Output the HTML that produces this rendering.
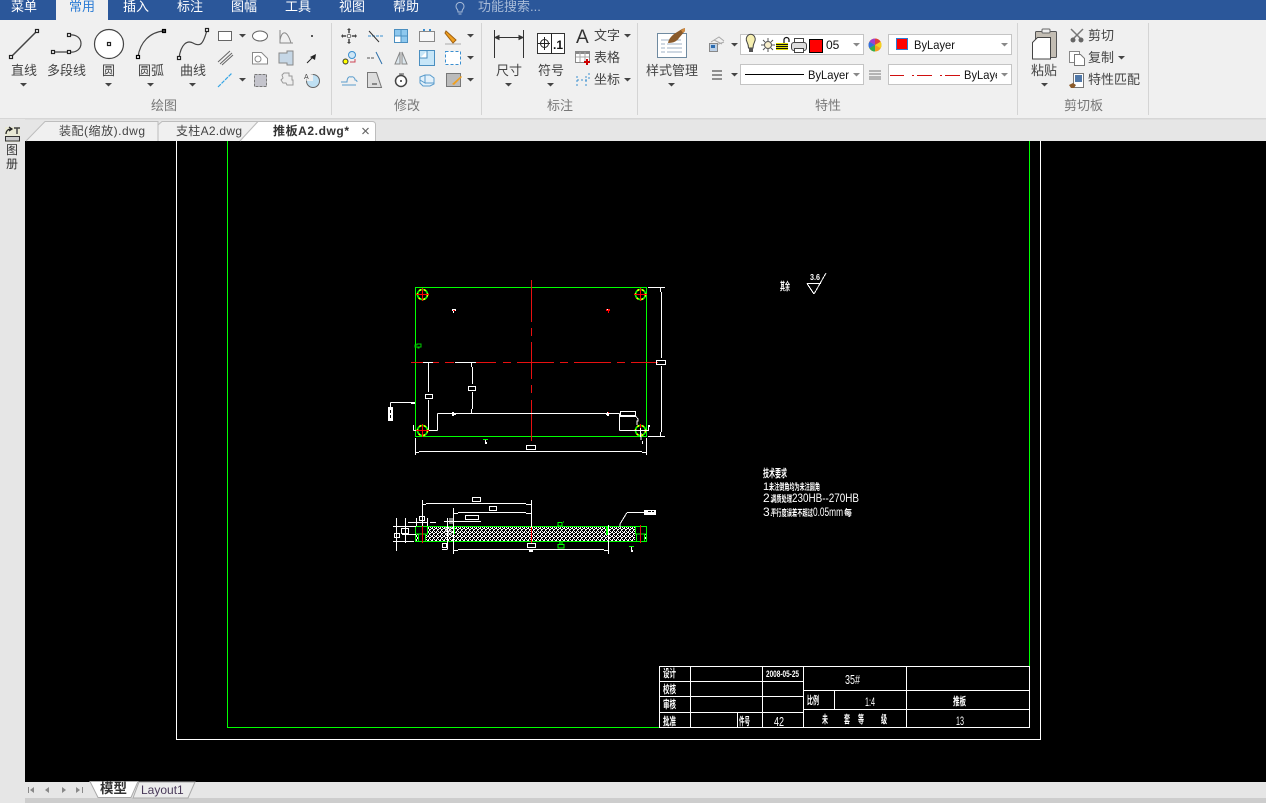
<!DOCTYPE html>
<html lang="zh">
<head>
<meta charset="utf-8">
<title>CAD</title>
<style>
html,body{margin:0;padding:0;width:1266px;height:803px;overflow:hidden;background:#000}
svg{display:block}
text{font-family:"Liberation Sans","Noto Sans CJK SC",sans-serif;white-space:pre}
.m{font-size:13px;fill:#fff}
.r{font-size:13px;fill:#444}
.g{font-size:13px;fill:#777}
.s{font-size:12px;fill:#111}
.t{font-size:12px;fill:#444}
.d{font-size:9px;fill:#fff}
.b{font-weight:bold}
.n{font-weight:normal}
.dl{stroke:#fff;fill:none;stroke-width:1}
.gr{stroke:#0f0;fill:none;stroke-width:1}
.rd{stroke:#e81010;fill:none;stroke-width:1}
.ic{fill:none;stroke:#555;stroke-width:1}
.bl{fill:none;stroke:#3a8fd0;stroke-width:1}
</style>
</head>
<body>
<svg xmlns="http://www.w3.org/2000/svg" width="1266" height="803" viewBox="0 0 1266 803">
<defs>
<path id="c" d="M-3 0h7l-3.500 3.500z" fill="#444"/>
<path id="cg" d="M-3 0h7l-3.500 3.500z" fill="#888"/>
<pattern id="h" width="4" height="4" patternUnits="userSpaceOnUse">
<rect width="4" height="4" fill="#000"/>
<path d="M0 3h1v1h-1zM1 2h1v1h-1zM2 1h1v1h-1zM3 0h1v1h-1zM0 0h1v1h-1zM2 3h1v1h-1zM1 1h1v1h-1z" fill="#fff"/>
</pattern>
</defs>

<!-- shell -->
<rect width="1266" height="803" fill="#000"/>
<rect y="0" width="1266" height="20" fill="#2b579a"/>
<rect y="20" width="1266" height="98" fill="#f0f0f0"/>
<rect y="118" width="1266" height="1.500" fill="#d6d6d6"/>
<rect y="119.500" width="1266" height="21.500" fill="#e6e6e6"/>
<rect x="0" y="119" width="25" height="684" fill="#e6e6e6"/>
<rect x="25" y="782" width="1241" height="16" fill="#e6e6e6"/>
<rect x="25" y="798" width="1241" height="5" fill="#cdcdcd"/>

<!-- menu -->
<rect x="56" y="0" width="52" height="21" fill="#f0f0f0"/>
<text class="m" x="11" y="11">菜单</text>
<text class="m" x="69" y="11" style="fill:#2a7bd4">常用</text>
<text class="m" x="123" y="11">插入</text>
<text class="m" x="177" y="11">标注</text>
<text class="m" x="231" y="11">图幅</text>
<text class="m" x="285" y="11">工具</text>
<text class="m" x="339" y="11">视图</text>
<text class="m" x="393" y="11">帮助</text>
<path d="M457 9a4 4 0 1 1 6 0c-1 1-1 2-1 3h-4c0-1 0-2-1-3zM458.500 14h3" fill="none" stroke="#a9bcd8"/>
<text class="m" x="478" y="11" style="fill:#a9bcd8">功能搜索...</text>

<!-- dividers -->
<g fill="#d4d4d4">
<rect x="331" y="23" width="1" height="92"/>
<rect x="481" y="23" width="1" height="92"/>
<rect x="637" y="23" width="1" height="92"/>
<rect x="1017" y="23" width="1" height="92"/>
<rect x="1148" y="23" width="1" height="92"/>
</g>

<!-- draw large icons -->
<g fill="none" stroke="#444" stroke-width="1.200">
<path d="M11 57L37 31" stroke-width="1.500"/>
<rect x="9.500" y="55.500" width="3" height="3" fill="#fff" stroke="#222"/>
<rect x="35.500" y="29.500" width="3" height="3" fill="#fff" stroke="#222"/>
<path d="M53 52H69M69 35C85 33 85 54 69 52"/>
<rect x="51.500" y="50.500" width="3" height="3" fill="#fff" stroke="#222"/>
<rect x="67.500" y="50.500" width="3" height="3" fill="#fff" stroke="#222"/>
<rect x="67.500" y="33.500" width="3" height="3" fill="#fff" stroke="#222"/>
<circle cx="109" cy="44" r="14.500" fill="#fff"/>
<rect x="107.500" y="42.500" width="3" height="3" fill="#fff" stroke="#222"/>
<path d="M138 57C140 42 150 32 164 31"/>
<rect x="136.500" y="55.500" width="3" height="3" fill="#fff" stroke="#000"/>
<rect x="162.500" y="29.500" width="3" height="3" fill="#000" stroke="#000"/>
<rect x="163.500" y="30.500" width="1" height="1" fill="#fff" stroke="none"/>
<path d="M179 58C181 44 187 40 193 43C200 47 203 45 207 30"/>
<rect x="177.500" y="56.500" width="3" height="3" fill="#fff" stroke="#222"/>
<rect x="205.500" y="28.500" width="3" height="3" fill="#fff" stroke="#222"/>
</g>
<text class="r" x="11" y="75">直线</text>
<text class="r" x="47" y="75">多段线</text>
<text class="r" x="102" y="75">圆</text>
<text class="r" x="138" y="75">圆弧</text>
<text class="r" x="180" y="75">曲线</text>
<use href="#c" x="23" y="83"/><use href="#c" x="108" y="83"/><use href="#c" x="150" y="83"/><use href="#c" x="192" y="83"/>
<text class="g" x="151" y="110">绘图</text>

<!-- draw small icons -->
<rect x="218.500" y="31.500" width="13" height="9" fill="#fff" stroke="#666"/>
<use href="#c" x="242" y="34"/>
<path d="M218 62L230 51M220 64L232 53M222 65L233 55" stroke="#666" fill="none"/>
<path d="M218 87L232 73" stroke="#35a5e5" stroke-width="1.200" stroke-dasharray="4 1"/>
<use href="#c" x="242" y="78"/>
<ellipse cx="260" cy="36" rx="7.500" ry="5" fill="#fff" stroke="#666"/>
<path d="M252.500 52.500h9l6 6v5.500h-15z" fill="#fff" stroke="#888"/>
<circle cx="258" cy="59" r="3" fill="none" stroke="#888"/>
<rect x="254.500" y="74.500" width="12" height="12" fill="#c4c4cc" stroke="#777" stroke-dasharray="3 1"/>
<path d="M280 30v13h13M280 40c2-10 7-10 11 3" fill="none" stroke="#888"/>
<path d="M279 53h8v-2h6v14h-6v-2h-8z" fill="#c6d7e6" stroke="#888"/>
<path d="M284 73h5v3h3v4h1v5h-6l-1-2h-3l-2-3 2-2-1-3z" fill="#eee" stroke="#999"/>
<rect x="311" y="35" width="2" height="2" fill="#555"/>
<path d="M307 63l6-6" stroke="#222"/><path d="M316 54l-1 6-5-3z" fill="#222"/>
<circle cx="313" cy="81" r="6.500" fill="#bfe0f3" stroke="#666"/>
<path d="M313 81v-6.500h-6.500v6.500z" fill="#f0f0f0"/>
<text x="304" y="79" style="font-size:7px;fill:#444">A</text>

<!-- modify -->
<path d="M349 29v4M349 39v4M342 36h4M352 36h4" stroke="#444" stroke-width="1.500"/>
<path d="M347 30h4l-2-2zM347 42h4l-2 2zM343 34v4l-2-2zM355 34v4l2-2z" fill="#444"/>
<circle cx="349" cy="36" r="1.800" fill="#fff" stroke="#666"/>
<path d="M368 36h16" stroke="#3a8fd0" stroke-dasharray="3 1"/>
<path d="M369 31l10 11" stroke="#333"/>
<rect x="394.500" y="29.500" width="13" height="13" fill="#8ec8ee" stroke="#4b8fc0"/>
<rect x="395" y="36" width="6" height="6" fill="#fff"/>
<path d="M401 30v12M395 36h12" stroke="#4b8fc0"/>
<rect x="419.500" y="31.500" width="15" height="10" fill="#f6f6f6" stroke="#888"/>
<path d="M423 30h2M429 30h2" stroke="#3a8fd0" stroke-width="2"/>
<path d="M446 31l10 9-3 3-8-10z" fill="#f0a020" stroke="#a06010"/>
<path d="M445 44h16" stroke="#aaa"/>
<use href="#c" x="470" y="34"/>

<circle cx="352" cy="55" r="3.500" fill="#cfe6f5" stroke="#3a8fd0"/>
<rect x="343" y="59" width="5" height="5" rx="2.500" fill="#ff0" stroke="#333"/>
<path d="M350 62h5v-3" stroke="#c45" fill="none"/>
<path d="M367 58h8" stroke="#555" stroke-dasharray="3 1"/>
<path d="M376 52l6 12" stroke="#2a6ea8"/>
<path d="M400 52v12h-5zM402 52v12h5z" fill="#dce7ee" stroke="#888"/>
<rect x="419.500" y="50.500" width="15" height="15" fill="#c7e6f8" stroke="#4b8fc0"/>
<path d="M420 58h7v-7" fill="#fff" stroke="#4b8fc0"/>
<rect x="445.500" y="51.500" width="15" height="13" fill="#fff" stroke="#3a8fd0" stroke-dasharray="3 2"/>
<use href="#c" x="470" y="56"/>

<path d="M342 85h14M341 82h6c0-4 2-6 4-5 2-1 4 1 4 3 2 0 2 1 2 2" fill="none" stroke="#5a9ccc"/>
<path d="M367.500 72.500h9l5 15h-14z" fill="#ddd" stroke="#777"/>
<path d="M372 84h5" stroke="#333"/>
<circle cx="401" cy="81" r="5.500" fill="#fff" stroke="#444" stroke-width="1.500"/>
<circle cx="401" cy="81" r="1" fill="#333"/>
<path d="M399 74h5" stroke="#444"/>
<path d="M420 77l5-2h5l4 3v6l-4 2h-7l-3-3zM425 75v8l-5-3M425 83h9" fill="#e4f1fa" stroke="#5a9ccc"/>
<rect x="446.500" y="73.500" width="14" height="13" fill="#bbb" stroke="#777"/>
<path d="M452 84l9-8 1 1-8 8z" fill="#f0a020"/>
<use href="#c" x="470" y="78"/>
<text class="g" x="394" y="110">修改</text>

<!-- annotate -->
<path d="M494.500 30v28M523.500 30v28M495 37.500h28M495 37.500l4-2v4zM523 37.500l-4-2v4z" fill="#333" stroke="#333"/>
<text class="r" x="496" y="75">尺寸</text>
<use href="#c" x="508" y="83"/>
<rect x="537.500" y="33.500" width="27" height="20" fill="#fff" stroke="#333"/>
<path d="M551.500 33.500v20M538 43.500h12M544.500 37v13" stroke="#222"/>
<circle cx="544.500" cy="43.500" r="4" fill="none" stroke="#222"/>
<text x="553" y="49" style="font-size:12px;font-weight:bold;fill:#111">.1</text>
<text class="r" x="538" y="75">符号</text>
<use href="#c" x="550" y="83"/>
<text x="576" y="43" style="font-size:19px;fill:#333">A</text>
<text class="r" x="594" y="40">文字</text>
<use href="#c" x="627" y="34"/>
<rect x="575.500" y="51.500" width="14" height="11" fill="#fff" stroke="#888"/>
<path d="M576 52h13v2h-13z" fill="#888"/>
<path d="M580 52v10M585 52v10M576 57h13" stroke="#aaa"/>
<path d="M587 59v6M584 62h6" stroke="#c00" stroke-width="2"/>
<text class="r" x="594" y="62">表格</text>
<path d="M577 86v-11M586 86v-11M577 80h12M589 73v7" stroke="#3a8fd0" stroke-dasharray="2 2" fill="none"/>
<text class="r" x="594" y="84">坐标</text>
<use href="#c" x="627" y="78"/>
<text class="g" x="547" y="110">标注</text>

<!-- style manager -->
<rect x="657.500" y="33.500" width="29" height="24" fill="#fff" stroke="#6f8aa0"/>
<path d="M661 40h20M661 44h4M667 44h15M661 48h4M667 48h15M661 52h4M667 52h15" stroke="#9fb0c4"/>
<path d="M668 43c1-5 4-7 6-9l8-5 3-1 0 3-6 7c-2 3-5 5-11 5z" fill="#8a5a2a"/>
<path d="M681 30l4-2 0 3-2 2z" fill="#d08a40"/>
<text class="r" x="646" y="75">样式管理</text>
<use href="#c" x="671" y="83"/>

<!-- properties -->
<path d="M711 42l8-5 5 4M716 45l8-3M714 40l8 4" stroke="#aaa" fill="none"/>
<rect x="709.500" y="43.500" width="8" height="8" fill="#bcd0e6" stroke="#888"/>
<rect x="711" y="45" width="4" height="3" fill="#2a6bb0"/>
<use href="#c" x="734" y="43"/>
<path d="M712 71h10M712 75h10M712 79h10" stroke="#555" stroke-width="1.200"/>
<use href="#c" x="734" y="73"/>

<rect x="740.500" y="34.500" width="123" height="20" fill="#fff" stroke="#c4c4c4"/>
<path d="M747 42a4.500 5 0 1 1 7.500 0c-1 2-1.500 3-1.500 6h-4.500c0-3-.5-4-1.500-6z" fill="#f6efb0" stroke="#444"/>
<rect x="749" y="48" width="4" height="4" fill="#555"/>
<circle cx="768" cy="45" r="3.500" fill="#f7eecb" stroke="#555"/>
<path d="M768 38v3M768 49v3M761 45h3M772 45h3M763 40l2 2M771 48l2 2M763 50l2-2M771 42l2-2" stroke="#555"/>
<rect x="776" y="43" width="12" height="7" fill="#dd0"/>
<path d="M776 44.500h12M776 46.500h12M776 48.500h12" stroke="#111"/>
<path d="M784 43v-3a2.500 2.500 0 0 1 5 0v2" fill="none" stroke="#111" stroke-width="1.200"/>
<rect x="791.500" y="42.500" width="15" height="8" rx="2.500" fill="#ddd" stroke="#444"/>
<rect x="794.500" y="38.500" width="9" height="4" fill="#fff" stroke="#444"/>
<rect x="794.500" y="48.500" width="9" height="4" fill="#fff" stroke="#444"/>
<rect x="809.500" y="39.500" width="13" height="13" fill="#f00" stroke="#000"/>
<text class="s" x="826" y="49">05</text>
<use href="#cg" x="856" y="43"/>

<circle cx="875" cy="45" r="6.500" fill="#f4a020"/>
<path d="M875 45V38.500a6.500 6.500 0 0 1 5.600 3.300z" fill="#e04040"/>
<path d="M875 45l5.600-3.200a6.500 6.500 0 0 1 0 6.500z" fill="#f4d020"/>
<path d="M875 45l-5.600-3.200a6.500 6.500 0 0 1 5.600-3.300z" fill="#a040d0"/>
<path d="M875 45l-5.600 3.200a6.500 6.500 0 0 1 0-6.400z" fill="#3070e0"/>
<path d="M875 45v6.500a6.500 6.500 0 0 1-5.600-3.300z" fill="#30b050"/>

<rect x="888.500" y="34.500" width="123" height="20" fill="#fff" stroke="#c4c4c4"/>
<rect x="896.500" y="38.500" width="11" height="11" fill="#f00" stroke="#2a7bd4"/>
<text class="s" x="914" y="49" textLength="41" lengthAdjust="spacingAndGlyphs">ByLayer</text>
<use href="#cg" x="1004" y="43"/>

<rect x="740.500" y="64.500" width="123" height="20" fill="#fff" stroke="#c4c4c4"/>
<path d="M745 74.500h59" stroke="#000"/>
<text class="s" x="808" y="79" textLength="41" lengthAdjust="spacingAndGlyphs">ByLayer</text>
<use href="#cg" x="856" y="73"/>
<path d="M869 71h12M869 74h12M869 77h12M869 79h12" stroke="#777"/>
<rect x="888.500" y="64.500" width="123" height="20" fill="#fff" stroke="#c4c4c4"/>
<path d="M890 75.500h14M912 75.500h2M917 75.500h15M940 75.500h2M945 75.500h15" stroke="#d01010"/>
<svg x="964" y="66" width="33" height="18" viewBox="0 0 33 18"><text class="s" x="0" y="13" textLength="41" lengthAdjust="spacingAndGlyphs">ByLayer</text></svg>
<use href="#cg" x="1004" y="73"/>
<text class="g" x="815" y="110">特性</text>

<!-- clipboard -->
<rect x="1035.500" y="31.500" width="21" height="26" rx="1" fill="#c3bdb3" stroke="#555"/>
<rect x="1042" y="29" width="8" height="4" rx="1" fill="#eee" stroke="#666"/>
<path d="M1032.500 42.500l5-5h13v21.500h-18z" fill="#fff" stroke="#444"/>
<text class="r" x="1031" y="75">粘贴</text>
<use href="#c" x="1044" y="83"/>
<path d="M1071 29l11 11M1083 29l-11 11" stroke="#777" stroke-width="1.500"/>
<circle cx="1073" cy="40" r="2.500" fill="#666"/><circle cx="1081" cy="40" r="2.500" fill="#666"/>
<text class="t" x="1088" y="40" style="font-size:13px">剪切</text>
<rect x="1069.500" y="51.500" width="10" height="11" fill="#fff" stroke="#888"/>
<path d="M1074.500 54.500h6l4 4v7h-10z" fill="#fff" stroke="#777"/>
<text class="t" x="1088" y="62" style="font-size:13px">复制</text>
<use href="#c" x="1121" y="56"/>
<rect x="1073.500" y="73.500" width="10" height="14" fill="#fff" stroke="#777"/>
<rect x="1075" y="75" width="7" height="7" fill="#5078a8"/>
<path d="M1069 85l4-2 3 2-2 3h-3z" fill="#8a5a2a"/>
<text class="t" x="1088" y="84" style="font-size:13px">特性匹配</text>
<text class="g" x="1064" y="110">剪切板</text>

<!-- doc tabs -->
<path d="M26 141L45 121.500H158V141" fill="#f0f0f0" stroke="#bdbdbd"/>
<path d="M158 141V125L162 121.500H258L240 141" fill="#f0f0f0" stroke="#bdbdbd"/>
<path d="M240 141L258 121.500H372Q375 121.500 375.500 124V141" fill="#fff" stroke="#bdbdbd"/>
<text class="t" x="59" y="135" textLength="86">装配(缩放).dwg</text>
<text class="t" x="176" y="135" textLength="66">支柱A2.dwg</text>
<text x="273" y="135" style="font-size:12px;font-weight:bold;fill:#333" textLength="76">推板A2.dwg*</text>
<path d="M362.500 128l6 6M368.500 128l-6 6" stroke="#666" stroke-width="1.200"/>

<!-- left strip -->
<rect x="5" y="127" width="15" height="15" fill="#e8e8d4"/>
<path d="M6 134c0-3 2-5 5-5M9 127l3 2-3 2" fill="none" stroke="#222" stroke-width="1.200"/>
<path d="M14 128h6M17 128v6" stroke="#444" stroke-width="1.500"/>
<rect x="5.500" y="136.500" width="14" height="4.500" fill="#ccc" stroke="#333"/>
<text x="6" y="154" style="font-size:12px;fill:#333">图</text>
<text x="6" y="168" style="font-size:12px;fill:#333">册</text>

<!-- model tabs -->
<path d="M28.500 787v6" stroke="#888"/><path d="M34 787v6l-4-3z" fill="#888"/>
<path d="M49 787v6l-4-3z" fill="#888"/>
<path d="M62 787v6l4-3z" fill="#888"/>
<path d="M76 787v6l4-3z" fill="#888"/><path d="M82.500 787v6" stroke="#888"/>
<path d="M133 798l6-16h56l-7 16z" fill="#ececec" stroke="#aaa"/>
<path d="M90 781.500l8 16h33l7-16z" fill="#fff" stroke="#aaa"/>
<text x="100" y="793" style="font-size:13.500px;font-weight:bold;fill:#333">模型</text>
<text x="141" y="794" style="font-size:12px;fill:#4a3a5a">Layout1</text>

<!-- CAD drawing -->
<g shape-rendering="crispEdges">
<!-- frames -->
<path class="dl" d="M176.500 141V739.500H1040.500V141"/>
<path class="gr" d="M227.500 141V727.500H1029.500V141"/>

<!-- title block -->
<rect x="659.500" y="666.500" width="370" height="61" fill="#000" stroke="#fff"/>
<path class="dl" d="M690.500 666.500V727.500M762.500 666.500V727.500M803.500 666.500V727.500M906.500 666.500V727.500M737.500 712.500V727.500M834.500 690.500V709.500M659.500 681.500H803.500M659.500 696.500H803.500M659.500 712.500H803.500M803.500 690.500H1029.500M803.500 709.500H1029.500"/>

<!-- top view : green & centrelines -->
<rect x="415.500" y="287.500" width="231" height="149" class="gr" stroke-width="1"/>
<path class="rd" d="M531.500 280V322M531.500 328V336M531.500 342V379M531.500 385V393M531.500 400V441"/>
<path class="rd" d="M411 362.500H439M445 362.500H454M455 362.500H496M503 362.500H511M517 362.500H554M560 362.500H568M574 362.500H611M617 362.500H625M631 362.500H658"/>
<path class="dl" d="M423 362.500H433M455 362.500H476"/>

<!-- top view white -->
<path class="dl" d="M648 287.500H665M648 436.500H665M661.500 292V358M661.500 366V432M660.500 287.500V292M660.500 432V436.500"/>
<rect x="656.500" y="360.500" width="9" height="4" class="dl" fill="#000"/>
<path class="dl" d="M415.500 438V455M646.500 438V455M419 451.500H642M415.500 452.500H419M642 452.500H646.500"/>
<rect x="526.500" y="445.500" width="9" height="4" class="dl"/>
<path class="dl" d="M437.500 413.500H619.500M437.500 413.500V430.500M413.500 430.500H437.500M413.500 425V430.500"/>
<path class="dl" d="M428.500 362V392M428.500 400V430"/>
<rect x="425.500" y="394.500" width="7" height="4" class="dl"/>
<path class="dl" d="M472.500 367V384M472.500 392V409M471.500 409V413M471.500 363V367"/>
<rect x="468.500" y="386.500" width="7" height="4" class="dl"/>
<path class="dl" d="M390.500 402.500H415M390.500 402.500V407M411 403.500H415"/>
<rect x="388" y="407" width="5" height="14" fill="#fff"/>
<rect x="390" y="410" width="1" height="3" fill="#000"/><rect x="390" y="415" width="1" height="3" fill="#000"/>
<rect x="620.500" y="411.500" width="15" height="4" class="dl"/>
<path class="dl" d="M619.500 413.500V430.500M619.500 430.500H649M619.500 416.500H636M636 416.500L638 419V421H637V425M648.500 425V430.500M641 433V440M642.500 441V444"/>
<rect x="648" y="425" width="2" height="2" fill="#fff"/>
<path d="M452 310V311H453V313H454V311H456V309H452z" fill="#fff"/>
<rect x="453" y="310" width="2" height="1" fill="#f00"/>
<path d="M606 309H610V311H609V313H608V311H606z" fill="#f00"/>
<rect x="607" y="309" width="1" height="1" fill="#fff"/>
<path d="M452 412H454V413H456V415H454V416H452z" fill="#fff"/>
<path d="M607 412H609V416H607V415H606V413H607z" fill="#fff"/>
<rect x="608" y="412" width="1" height="1" fill="#f00"/>
<path d="M417 344H421V347H419V348H418V347H415V345H417z" fill="none" stroke="#0c0"/>
<path class="gr" d="M483 439.500H488"/>
<path d="M485 440h1v2h1v2h-2z" fill="#fff"/>

<!-- section view -->
<rect x="427" y="527" width="208" height="14" fill="url(#h)"/>
<rect x="416" y="534" width="3" height="7" fill="url(#h)"/>
<rect x="425" y="534" width="3" height="7" fill="url(#h)"/>
<rect x="644" y="534" width="2" height="7" fill="url(#h)"/>
<path d="M415.500 526.500H646.500V541.500H415.500z" stroke="#0f0" fill="none" stroke-width="1"/>
<path class="gr" d="M416 534H427.500V527M418.500 534V541M425.500 534V541M635.500 527V534H646M636.500 534V541M644.500 534V541M454.500 527V534"/>
<path d="M606 527h2v8h-2z" fill="#0f0"/>
<path class="rd" d="M422.500 525V543M453.500 527V533M531.500 525V543M608.500 525V534M640.500 525V543" stroke-width="1"/>
<rect x="531" y="526" width="1" height="17" fill="#f00"/>
<path class="dl" d="M422.500 500V526M531.500 500V527M426 503.500H526M422.500 504.500H426M526 504.500H531.500"/>
<rect x="472.500" y="497.500" width="8" height="4" class="dl"/>
<path class="dl" d="M453.500 508V554M458 512.500H526M453.500 513.500H458M526 513.500H531.500"/>
<rect x="489.500" y="506.500" width="7" height="4" class="dl"/>
<rect x="465.500" y="515.500" width="13" height="4" class="dl"/>
<path class="dl" d="M459 521.500H481M450 518V524M452 518V524"/>
<path class="dl" d="M458 549.500H604M453.500 550.500H458M604 550.500H608.500M608.500 525V554"/>
<rect x="527.500" y="543.500" width="8" height="4" class="dl"/>
<rect x="529" y="550" width="4" height="2" fill="#fff"/>
<path class="dl" d="M644 512.500H627M627 512.500L620 524V527"/>
<rect x="644" y="510" width="12" height="5" fill="#fff"/>
<rect x="648" y="511" width="3" height="1" fill="#000"/><rect x="652" y="511" width="2" height="1" fill="#000"/>
<path class="dl" d="M393 526.500H416M393 541.500H414M396.500 518V551M405.500 518V543"/>
<rect x="394.500" y="533.500" width="5" height="4" class="dl"/>
<rect x="401.500" y="528.500" width="7" height="5" class="dl"/>
<path class="dl" d="M402 534.500H416M408 522.500H428M409 522.500H412M430 522.500H436M416.500 518V526M427.500 518V526"/>
<rect x="419.500" y="516.500" width="5" height="4" class="dl"/>
<path class="dl" d="M447.500 518V549M442 549.500H447.500M444 521.500H459"/>
<rect x="442.500" y="543.500" width="4" height="4" class="dl"/>
<path class="dl" d="M445 528H452M445 531H452M445 534H452"/>
<path class="gr" d="M558 522.500H562V526H558zM564 522H563M558 544.500H564V548H558zM560 542V544M562 542V544"/>
<path class="gr" d="M629 546.500H634"/>
<path d="M631 547h1v3h1v2h-2z" fill="#fff"/>

<!-- roughness -->
<path class="dl" d="M807 283.500H821M807 283.500L814 294M814 294L826 273"/>
</g>

<!-- hole symbols -->
<g fill="none">
<g id="hole1">
<circle cx="422.500" cy="294.500" r="5" stroke="#0f0" stroke-width="1.600"/>
<circle cx="422.500" cy="294.500" r="5" stroke="#ff0" stroke-width="1.600" stroke-dasharray="2 3"/>
<path d="M416 294.500H429M422.500 288V301" stroke="#f00"/>
</g>
<circle cx="640.500" cy="294.500" r="5" stroke="#0f0" stroke-width="1.600"/>
<circle cx="640.500" cy="294.500" r="5" stroke="#ff0" stroke-width="1.600" stroke-dasharray="2 3"/>
<path d="M634 294.500H647M640.500 288V301" stroke="#f00"/>
<circle cx="422.500" cy="430.500" r="5" stroke="#0f0" stroke-width="1.600"/>
<circle cx="422.500" cy="430.500" r="5" stroke="#ff0" stroke-width="1.600" stroke-dasharray="2 3"/>
<path d="M416 430.500H429M422.500 424V437" stroke="#f00"/>
<circle cx="640.500" cy="430.500" r="5" stroke="#0f0" stroke-width="1.600"/>
<circle cx="640.500" cy="430.500" r="5" stroke="#ff0" stroke-width="1.600" stroke-dasharray="2 3"/>
<path d="M634 430.500H647M640.500 424V437" stroke="#fff"/>
<path d="M640.500 424V428" stroke="#f00"/>
</g>

<!-- drawing text -->
<g>
<text class="d b" x="780" y="290" style="font-size:11px" textLength="10" lengthAdjust="spacingAndGlyphs">其余</text>
<text class="d b" x="810" y="280" style="font-size:8px" textLength="10" lengthAdjust="spacingAndGlyphs">3.6</text>

<text class="d b" x="763" y="477" style="font-size:11px" textLength="24" lengthAdjust="spacingAndGlyphs">技术要求</text>
<text class="d" x="763" y="490" style="font-size:11px">1.</text>
<text class="d b" x="769" y="490" style="font-size:9px" textLength="51" lengthAdjust="spacingAndGlyphs">未注倒角均为未注圆角</text>
<text class="d" x="763" y="502" style="font-size:12px">2.</text>
<text class="d b" x="771" y="502" style="font-size:9px" textLength="21" lengthAdjust="spacingAndGlyphs">调质处理</text>
<text class="d" x="792" y="502" style="font-size:12px" textLength="67" lengthAdjust="spacingAndGlyphs">230HB--270HB</text>
<text class="d" x="763" y="516" style="font-size:12px">3.</text>
<text class="d b" x="771" y="516" style="font-size:9px" textLength="42" lengthAdjust="spacingAndGlyphs">平行度误差不超过</text>
<text class="d" x="813" y="516" style="font-size:12px" textLength="30" lengthAdjust="spacingAndGlyphs">0.05mm</text>
<text class="d b" x="844" y="516" style="font-size:9px" textLength="8" lengthAdjust="spacingAndGlyphs">每</text>

<text class="d b" x="663" y="677" style="font-size:11px" textLength="13" lengthAdjust="spacingAndGlyphs">设计</text>
<text class="d b" x="663" y="693" style="font-size:11px" textLength="13" lengthAdjust="spacingAndGlyphs">校核</text>
<text class="d b" x="663" y="708" style="font-size:11px" textLength="13" lengthAdjust="spacingAndGlyphs">审核</text>
<text class="d b" x="663" y="725" style="font-size:11px" textLength="13" lengthAdjust="spacingAndGlyphs">批准</text>
<text class="d b" x="739" y="725" style="font-size:11px" textLength="11" lengthAdjust="spacingAndGlyphs">件号</text>
<text class="d b" x="766" y="677" style="font-size:9px" textLength="33" lengthAdjust="spacingAndGlyphs">2008-05-25</text>
<text class="d" x="774" y="726" style="font-size:13px" textLength="10" lengthAdjust="spacingAndGlyphs">42</text>
<text class="d" x="845" y="684" style="font-size:13px" textLength="15" lengthAdjust="spacingAndGlyphs">35#</text>
<text class="d b" x="807" y="704" style="font-size:11px" textLength="12" lengthAdjust="spacingAndGlyphs">比例</text>
<text class="d" x="865" y="706" style="font-size:12px" textLength="10" lengthAdjust="spacingAndGlyphs">1:4</text>
<text class="d b" x="953" y="705" style="font-size:11px" textLength="13" lengthAdjust="spacingAndGlyphs">推板</text>
<text class="d b" x="822" y="723" style="font-size:11px" textLength="6" lengthAdjust="spacingAndGlyphs">未</text>
<text class="d b" x="844" y="723" style="font-size:11px" textLength="6" lengthAdjust="spacingAndGlyphs">套</text>
<text class="d b" x="858" y="723" style="font-size:11px" textLength="6" lengthAdjust="spacingAndGlyphs">等</text>
<text class="d b" x="881" y="723" style="font-size:11px" textLength="6" lengthAdjust="spacingAndGlyphs">级</text>
<text class="d" x="956" y="725" style="font-size:12px" textLength="8" lengthAdjust="spacingAndGlyphs">13</text>
</g>
</svg>
</body>
</html>
